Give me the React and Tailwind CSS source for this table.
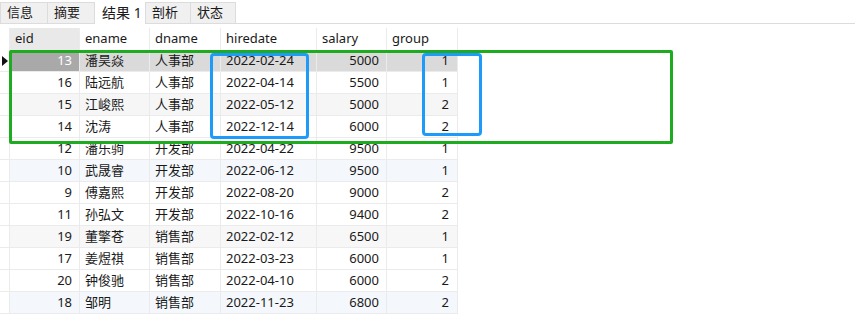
import React from 'react';

const rows = [
  { eid: 13, ename: '潘昊焱', dname: '人事部', hiredate: '2022-02-24', salary: 5000, group: 1, bg: 'bg-[#dadada]', sel: true },
  { eid: 16, ename: '陆远航', dname: '人事部', hiredate: '2022-04-14', salary: 5500, group: 1, bg: 'bg-white' },
  { eid: 15, ename: '江峻熙', dname: '人事部', hiredate: '2022-05-12', salary: 5000, group: 2, bg: 'bg-[#f6f6f6]' },
  { eid: 14, ename: '沈涛', dname: '人事部', hiredate: '2022-12-14', salary: 6000, group: 2, bg: 'bg-white' },
  { eid: 12, ename: '潘乐驹', dname: '开发部', hiredate: '2022-04-22', salary: 9500, group: 1, bg: 'bg-white' },
  { eid: 10, ename: '武晟睿', dname: '开发部', hiredate: '2022-06-12', salary: 9500, group: 1, bg: 'bg-[#f4f8fc]' },
  { eid: 9, ename: '傅嘉熙', dname: '开发部', hiredate: '2022-08-20', salary: 9000, group: 2, bg: 'bg-white' },
  { eid: 11, ename: '孙弘文', dname: '开发部', hiredate: '2022-10-16', salary: 9400, group: 2, bg: 'bg-white' },
  { eid: 19, ename: '董擎苍', dname: '销售部', hiredate: '2022-02-12', salary: 6500, group: 1, bg: 'bg-[#f7f7f7]' },
  { eid: 17, ename: '姜煜祺', dname: '销售部', hiredate: '2022-03-23', salary: 6000, group: 1, bg: 'bg-white' },
  { eid: 20, ename: '钟俊驰', dname: '销售部', hiredate: '2022-04-10', salary: 6000, group: 2, bg: 'bg-white' },
  { eid: 18, ename: '邹明', dname: '销售部', hiredate: '2022-11-23', salary: 6800, group: 2, bg: 'bg-[#f4f8fc]' },
];

const tabs = ['信息', '摘要', '结果 1', '剖析', '状态'];

const cell = 'h-[22px] border-r border-b border-[#ebebeb] flex items-center';

export default function App() {
  return (
    <div
      className="relative w-[855px] h-[336px] bg-white text-[13px] text-[#1a1a1a] overflow-hidden"
      style={{ fontFamily: '"Noto Sans", "Noto Sans CJK SC", sans-serif' }}
    >
      {/* tabs */}
      <div className="flex items-end h-[24px] border-b border-[#dcdcdc]">
        {tabs.map((t, i) =>
          i === 2 ? (
            <div key={t} className="w-[50px] h-[24px] -mb-px bg-white flex items-center pl-[7px] text-[14px]">
              {t}
            </div>
          ) : (
            <div
              key={t}
              className={`h-[22px] -mb-px bg-[#f0f0f0] border border-[#dcdcdc] flex items-center pl-[6px] ${i < 2 ? 'w-[48px]' : 'w-[46px]'} ${i === 0 || i === 3 ? '' : '-ml-px'}`}
            >
              {t}
            </div>
          )
        )}
      </div>

      {/* grid */}
      <div className="mt-[4px]">
        <div className="flex">
          <div className="w-[10px] h-[22px] border-r border-[#ebebeb]" />
          <div className="w-[70px] h-[22px] bg-[#e9e9e9] border-r border-[#ebebeb] flex items-center pl-[5px]">eid</div>
          <div className="w-[70px] h-[22px] border-r border-[#ebebeb] flex items-center pl-[5px]">ename</div>
          <div className="w-[71px] h-[22px] border-r border-[#ebebeb] flex items-center pl-[5px]">dname</div>
          <div className="w-[96px] h-[22px] border-r border-[#ebebeb] flex items-center pl-[5px]">hiredate</div>
          <div className="w-[70px] h-[22px] border-r border-[#ebebeb] flex items-center pl-[5px]">salary</div>
          <div className="w-[71px] h-[22px] border-r border-[#ebebeb] flex items-center pl-[5px]">group</div>
        </div>
        {rows.map((r) => (
          <div key={r.eid} className="flex">
            <div className={`w-[10px] ${cell} border-[#d8d8d8] justify-center`}>
              {r.sel && (
                <svg width="6" height="10" viewBox="0 0 6 10">
                  <path d="M0 0 L6 5 L0 10 Z" fill="#111" />
                </svg>
              )}
            </div>
            <div className={`w-[70px] ${cell} justify-end pr-[7px] ${r.sel ? 'bg-[#a9a9a9] text-white' : r.bg}`}>{r.eid}</div>
            <div className={`w-[70px] ${cell} pl-[5px] ${r.bg}`}>{r.ename}</div>
            <div className={`w-[71px] ${cell} pl-[5px] ${r.bg}`}>{r.dname}</div>
            <div className={`w-[96px] ${cell} pl-[5px] ${r.bg}`}>{r.hiredate}</div>
            <div className={`w-[70px] ${cell} justify-end pr-[7px] ${r.bg}`}>{r.salary}</div>
            <div className={`w-[71px] ${cell} justify-end pr-[8px] ${r.bg}`}>{r.group}</div>
          </div>
        ))}
      </div>

      {/* annotation boxes */}
      <div className="absolute left-[9px] top-[50px] w-[664px] h-[94px] border-[3px] border-[#1fab1f] rounded-[2px]" />
      <div className="absolute left-[210px] top-[53px] w-[99px] h-[86px] border-[3px] border-[#1e9bfa] rounded-[4px]" />
      <div className="absolute left-[422px] top-[53px] w-[60px] h-[83px] border-[3px] border-[#1e9bfa] rounded-[4px]" />
    </div>
  );
}
